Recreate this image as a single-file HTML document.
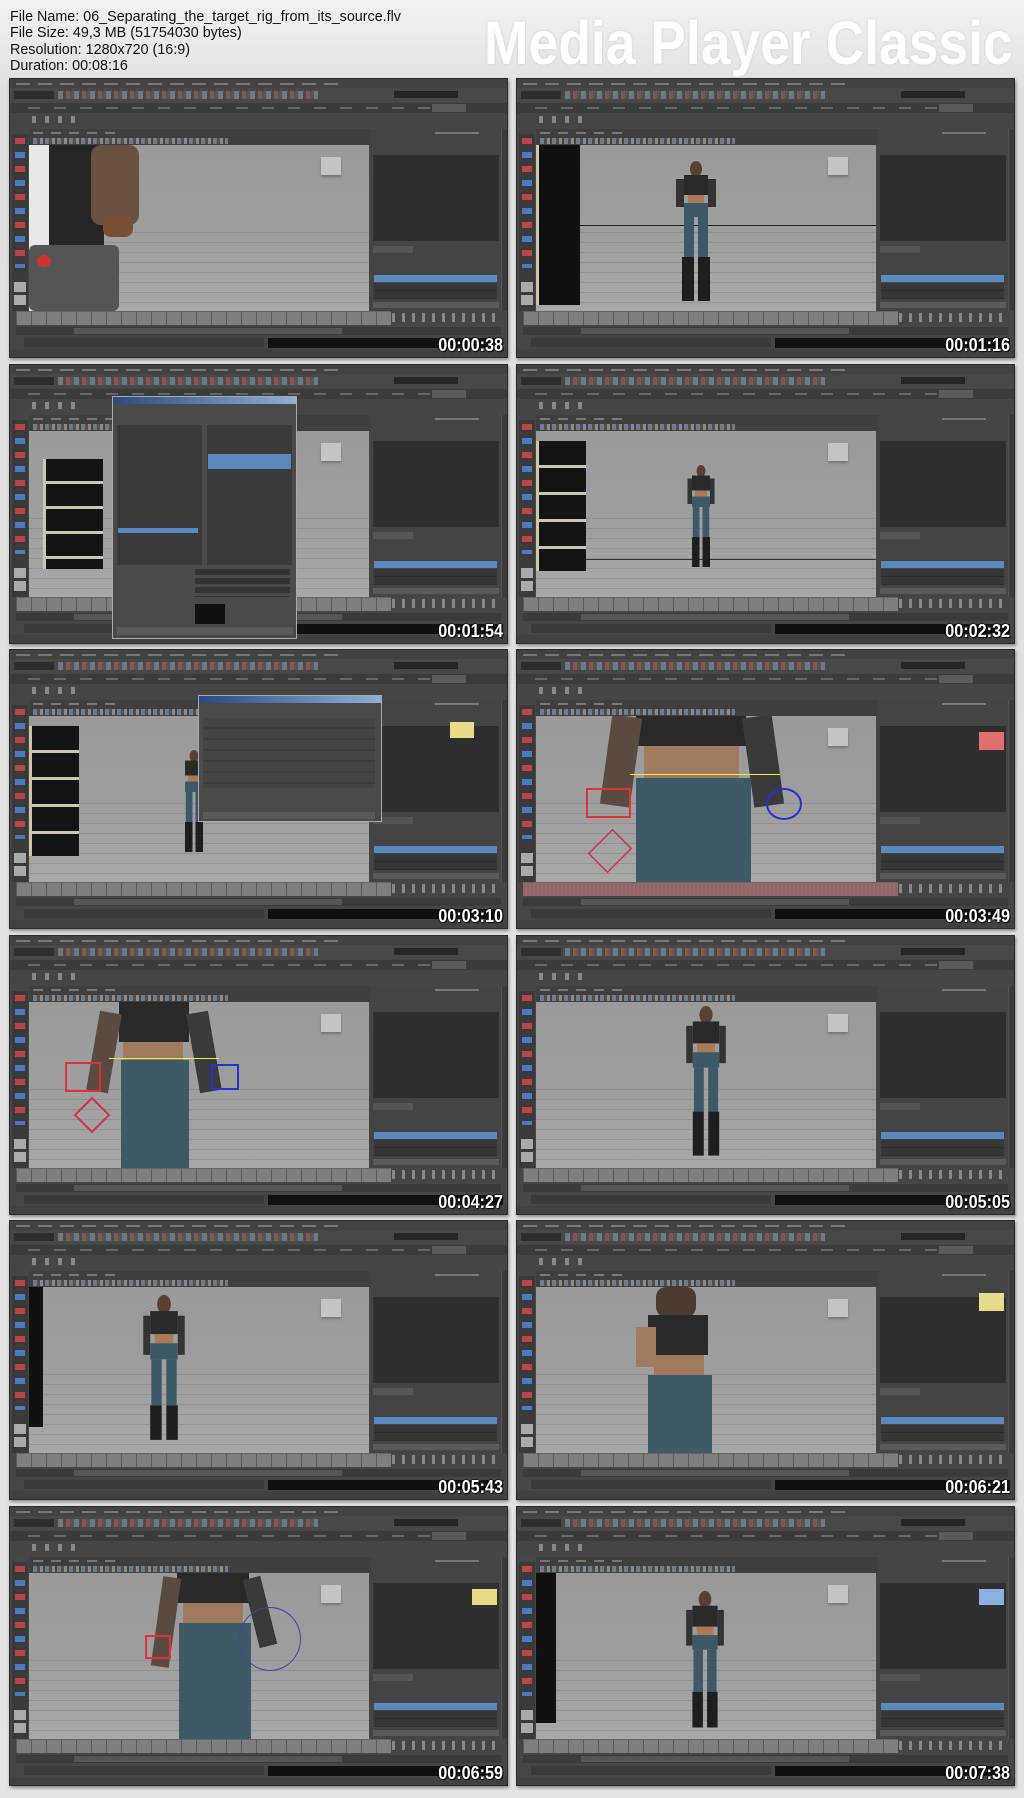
<!DOCTYPE html>
<html><head><meta charset="utf-8">
<style>
*{margin:0;padding:0;box-sizing:border-box}
body{width:1024px;height:1798px;overflow:hidden;background:linear-gradient(180deg,#f2f2f2 0%,#e0e0e0 5%,#e4e4e4 100%);font-family:"Liberation Sans",sans-serif;position:relative}
.hdr{position:absolute;left:10px;top:9px;font-size:15px;line-height:16.3px;color:#111;transform:scaleX(.955);transform-origin:0 0;white-space:nowrap}
.title{position:absolute;left:484px;top:8px;font-weight:bold;font-size:61px;color:#fff;text-shadow:0 0 3px #ccc;white-space:nowrap;transform:scaleX(.876);transform-origin:0 0}
.t{position:absolute;width:499px;height:280px;background:#464646;overflow:hidden;box-shadow:1px 2px 3px rgba(0,0,0,.4);border:1px solid #2a2a2a}
.t div{position:absolute}
.mb{left:0;top:0;width:499px;height:9px;background:#424242;}
.mb:after{content:"";position:absolute;left:6px;top:4px;width:330px;height:2px;background:repeating-linear-gradient(90deg,#777 0 14px,transparent 14px 22px)}
.tb{left:0;top:9px;width:499px;height:14px;background:#484848}
.tb:before{content:"";position:absolute;left:4px;top:3px;width:40px;height:8px;background:#2e2e2e}
.tb:after{content:"";position:absolute;left:48px;top:3px;width:260px;height:8px;background:repeating-linear-gradient(90deg,#6a7a8c 0 5px,#4c4c4c 5px 8px,#8a5550 8px 12px,#555 12px 16px)}
.tbk{left:384px;top:12px;width:64px;height:7px;background:#262626}
.st{left:0;top:24px;width:499px;height:10px;background:#3b3b3b}
.st:after{content:"";position:absolute;left:18px;top:4px;width:412px;height:2px;background:repeating-linear-gradient(90deg,#666 0 12px,transparent 12px 26px)}
.stsel{left:422px;top:25px;width:34px;height:8px;background:#5a5a5a}
.sh{left:0;top:34px;width:499px;height:15px;background:#454545}
.sh:after{content:"";position:absolute;left:22px;top:3px;width:46px;height:7px;background:repeating-linear-gradient(90deg,#888 0 4px,transparent 4px 13px)}
.pm{left:19px;top:50px;width:342px;height:16px;background:#3f3f3f}
.pm:before{content:"";position:absolute;left:4px;top:3px;width:90px;height:2px;background:repeating-linear-gradient(90deg,#777 0 10px,transparent 10px 18px)}
.pm:after{content:"";position:absolute;left:4px;top:9px;width:195px;height:6px;background:repeating-linear-gradient(90deg,#6d7d90 0 4px,#505050 4px 7px,#8a8a8a 7px 10px,#444 10px 12px)}
.lt{left:2px;top:55px;width:16px;height:177px;background:#3a3a3a}
.lt:after{content:"";position:absolute;left:3px;top:4px;width:10px;height:130px;background:repeating-linear-gradient(180deg,#b44 0 6px,#3a3a3a 6px 14px,#4a7ac0 14px 20px,#3a3a3a 20px 28px)}
.lt2{left:4px;top:203px;width:12px;height:24px;background:repeating-linear-gradient(180deg,#aaa 0 10px,#3a3a3a 10px 13px)}
.vp{left:19px;top:66px;width:340px;height:166px;background:linear-gradient(180deg,#9a9a9a 0%,#9e9e9e 50%,#a8a8a8 100%);overflow:hidden}
.grid{left:0;top:78px;width:340px;height:88px;background:repeating-linear-gradient(180deg,transparent 0 9px,rgba(80,80,80,.2) 9px 10px)}
.vc{left:292px;top:12px;width:20px;height:18px;background:#c4c4c4;box-shadow:0 2px 2px #777}
.rp{left:361px;top:50px;width:130px;height:182px;background:#444}
.rp:before{content:"";position:absolute;left:64px;top:3px;width:44px;height:2px;background:#777}
.rd{left:363px;top:76px;width:126px;height:86px;background:#2f2f2f}
.rt{left:363px;top:167px;width:40px;height:7px;background:#555}
.rl{left:364px;top:196px;width:123px;height:7px;background:#5b88bd}
.rl2{left:364px;top:204px;width:123px;height:16px;background:repeating-linear-gradient(180deg,#373737 0 7px,#2c2c2c 7px 8px)}
.rs{left:363px;top:223px;width:126px;height:6px;background:#5a5a5a}
.rb{left:491px;top:50px;width:8px;height:182px;background:#3b3b3b;border-left:1px solid #555}
.tl{left:6px;top:232px;width:375px;height:14px;background:repeating-linear-gradient(90deg,#5a5a5a 0 1px,#7e7e7e 1px 15px);border-top:1px solid #666}
.tr{left:382px;top:234px;width:110px;height:9px;background:repeating-linear-gradient(90deg,#888 0 3px,#454545 3px 10px)}
.rg{left:6px;top:248px;width:485px;height:8px;background:#3b3b3b}
.rg:after{content:"";position:absolute;left:58px;top:1px;width:268px;height:6px;background:#555}
.cl{left:14px;top:259px;width:240px;height:9px;background:#3a3a3a}
.cb{left:258px;top:259px;width:235px;height:10px;background:#111}
.sb{left:0;top:270px;width:499px;height:10px;background:#414141}
.ts{right:4px;bottom:1px;font-weight:bold;font-size:18px;color:#fff;text-shadow:1px 1px 1px #000,-1px 0 1px #000,0 -1px 1px #222;transform:scaleX(.9);transform-origin:100% 100%}
.shelf{background:#111;border-left:3px solid #cfc6ae}
.dlg{background:#4a4a4a;border:1px solid #aaa}
.fg div{position:absolute}
</style></head><body>
<div class="hdr">File Name: 06_Separating_the_target_rig_from_its_source.flv<br>File Size: 49,3 MB (51754030 bytes)<br>Resolution: 1280x720 (16:9)<br>Duration: 00:08:16</div>
<div class="title">Media Player Classic</div>

<!-- 1 -->
<div class="t" style="left:9px;top:78px">
<div class="mb"></div><div class="tb"></div><div class="tbk"></div><div class="st"></div><div class="stsel"></div><div class="sh"></div><div class="pm"></div><div class="lt"></div><div class="lt2"></div>
<div class="vp"><div class="grid"></div><div class="vc"></div>
<div style="left:0;top:0;width:30px;height:166px;background:#e8e8e8"></div>
<div style="left:20px;top:0;width:55px;height:166px;background:#262626"></div>
<div style="left:62px;top:0;width:48px;height:80px;background:#6a5040;border-radius:10px"></div>
<div style="left:74px;top:70px;width:30px;height:22px;background:#7a5035;border-radius:8px"></div>
<div style="left:0;top:100px;width:90px;height:66px;background:#555;border-radius:6px"></div>
<div style="left:8px;top:110px;width:14px;height:12px;background:#c33;border-radius:50%"></div>
</div>
<div class="rp"></div><div class="rd"></div><div class="rt"></div><div class="rl"></div><div class="rl2"></div><div class="rs"></div><div class="rb"></div>
<div class="tl"></div><div class="tr"></div><div class="rg"></div><div class="cl"></div><div class="cb"></div><div class="sb"></div>
<div class="ts">00:00:38</div></div>

<!-- 2 -->
<div class="t" style="left:516px;top:78px">
<div class="mb"></div><div class="tb"></div><div class="tbk"></div><div class="st"></div><div class="stsel"></div><div class="sh"></div><div class="pm"></div><div class="lt"></div><div class="lt2"></div>
<div class="vp"><div class="grid"></div><div class="vc"></div>
<div class="shelf" style="left:0;top:0;width:44px;height:160px"></div>
<div style="left:44px;top:80px;width:296px;height:1px;background:#222"></div>
<div class="fg" style="left:140px;top:16px">
<div style="left:14px;top:0;width:12px;height:16px;background:#5a4030;border-radius:50%"></div>
<div style="left:8px;top:14px;width:24px;height:20px;background:#2a2a2a"></div>
<div style="left:12px;top:34px;width:16px;height:8px;background:#a87a58"></div>
<div style="left:0;top:18px;width:8px;height:28px;background:#333"></div>
<div style="left:32px;top:18px;width:8px;height:28px;background:#333"></div>
<div style="left:8px;top:42px;width:24px;height:14px;background:#3d5866"></div>
<div style="left:8px;top:56px;width:10px;height:40px;background:#3d5866"></div>
<div style="left:22px;top:56px;width:10px;height:40px;background:#3d5866"></div>
<div style="left:6px;top:96px;width:12px;height:44px;background:#1e1e1e"></div>
<div style="left:22px;top:96px;width:12px;height:44px;background:#1e1e1e"></div>
</div></div>
<div class="rp"></div><div class="rd"></div><div class="rt"></div><div class="rl"></div><div class="rl2"></div><div class="rs"></div><div class="rb"></div>
<div class="tl"></div><div class="tr"></div><div class="rg"></div><div class="cl"></div><div class="cb"></div><div class="sb"></div>
<div class="ts">00:01:16</div></div>

<!-- 3 -->
<div class="t" style="left:9px;top:364px">
<div class="mb"></div><div class="tb"></div><div class="tbk"></div><div class="st"></div><div class="stsel"></div><div class="sh"></div><div class="pm"></div><div class="lt"></div><div class="lt2"></div>
<div class="vp"><div class="grid"></div><div class="vc"></div>
<div class="shelf" style="left:14px;top:28px;width:60px;height:110px;background:repeating-linear-gradient(180deg,#141414 0 22px,#cfc6ae 22px 25px)"></div>
</div>
<div class="rp"></div><div class="rd"></div><div class="rt"></div><div class="rl"></div><div class="rl2"></div><div class="rs"></div><div class="rb"></div>
<div class="tl"></div><div class="tr"></div><div class="rg"></div><div class="cl"></div><div class="cb"></div><div class="sb"></div>
<div class="dlg" style="left:102px;top:31px;width:185px;height:243px">
<div style="left:0;top:0;width:183px;height:7px;background:linear-gradient(90deg,#2a4a80,#8fb0d8)"></div>
<div style="left:4px;top:28px;width:85px;height:140px;background:#3a3a3a"></div>
<div style="left:94px;top:28px;width:85px;height:140px;background:#3a3a3a"></div>
<div style="left:95px;top:57px;width:83px;height:15px;background:#5b88bd"></div>
<div style="left:5px;top:131px;width:80px;height:5px;background:#5b88bd"></div>
<div style="left:82px;top:172px;width:95px;height:28px;background:repeating-linear-gradient(180deg,#333 0 6px,#4a4a4a 6px 9px)"></div>
<div style="left:82px;top:207px;width:30px;height:20px;background:#111"></div>
<div style="left:4px;top:230px;width:176px;height:8px;background:#5a5a5a"></div>
</div>
<div class="ts">00:01:54</div></div>

<!-- 4 -->
<div class="t" style="left:516px;top:364px">
<div class="mb"></div><div class="tb"></div><div class="tbk"></div><div class="st"></div><div class="stsel"></div><div class="sh"></div><div class="pm"></div><div class="lt"></div><div class="lt2"></div>
<div class="vp"><div class="grid"></div><div class="vc"></div>
<div class="shelf" style="left:0;top:10px;width:50px;height:130px;background:repeating-linear-gradient(180deg,#141414 0 24px,#cfc6ae 24px 27px)"></div>
<div style="left:50px;top:128px;width:290px;height:1px;background:#333"></div>
<div class="fg" style="left:150px;top:34px;transform:scale(.75);transform-origin:0 0">
<div style="left:14px;top:0;width:12px;height:16px;background:#5a4030;border-radius:50%"></div>
<div style="left:8px;top:14px;width:24px;height:20px;background:#2a2a2a"></div>
<div style="left:12px;top:34px;width:16px;height:8px;background:#a87a58"></div>
<div style="left:2px;top:18px;width:6px;height:34px;background:#333"></div>
<div style="left:32px;top:18px;width:6px;height:34px;background:#333"></div>
<div style="left:8px;top:42px;width:24px;height:14px;background:#3d5866"></div>
<div style="left:9px;top:56px;width:9px;height:40px;background:#3d5866"></div>
<div style="left:22px;top:56px;width:9px;height:40px;background:#3d5866"></div>
<div style="left:8px;top:96px;width:10px;height:40px;background:#1e1e1e"></div>
<div style="left:22px;top:96px;width:10px;height:40px;background:#1e1e1e"></div>
</div></div>
<div class="rp"></div><div class="rd"></div><div class="rt"></div><div class="rl"></div><div class="rl2"></div><div class="rs"></div><div class="rb"></div>
<div class="tl"></div><div class="tr"></div><div class="rg"></div><div class="cl"></div><div class="cb"></div><div class="sb"></div>
<div class="ts">00:02:32</div></div>

<!-- 5 -->
<div class="t" style="left:9px;top:649px">
<div class="mb"></div><div class="tb"></div><div class="tbk"></div><div class="st"></div><div class="stsel"></div><div class="sh"></div><div class="pm"></div><div class="lt"></div><div class="lt2"></div>
<div class="vp"><div class="grid"></div><div class="vc"></div>
<div class="shelf" style="left:0;top:10px;width:50px;height:130px;background:repeating-linear-gradient(180deg,#141414 0 24px,#cfc6ae 24px 27px)"></div>
<div class="fg" style="left:150px;top:34px;transform:scale(.75);transform-origin:0 0">
<div style="left:14px;top:0;width:12px;height:16px;background:#5a4030;border-radius:50%"></div>
<div style="left:8px;top:14px;width:24px;height:20px;background:#2a2a2a"></div>
<div style="left:12px;top:34px;width:16px;height:8px;background:#a87a58"></div>
<div style="left:8px;top:42px;width:24px;height:14px;background:#3d5866"></div>
<div style="left:9px;top:56px;width:9px;height:40px;background:#3d5866"></div>
<div style="left:22px;top:56px;width:9px;height:40px;background:#3d5866"></div>
<div style="left:8px;top:96px;width:10px;height:40px;background:#1e1e1e"></div>
<div style="left:22px;top:96px;width:10px;height:40px;background:#1e1e1e"></div>
</div></div>
<div class="rp"></div><div class="rd"></div><div class="rt"></div><div class="rl"></div><div class="rl2"></div><div class="rs"></div><div class="rb"></div>
<div style="left:440px;top:72px;width:24px;height:16px;background:#e6dc8a"></div>
<div class="tl"></div><div class="tr"></div><div class="rg"></div><div class="cl"></div><div class="cb"></div><div class="sb"></div>
<div class="dlg" style="left:188px;top:45px;width:184px;height:127px">
<div style="left:0;top:0;width:182px;height:7px;background:linear-gradient(90deg,#2a4a80,#8fb0d8)"></div>
<div style="left:4px;top:22px;width:172px;height:70px;background:repeating-linear-gradient(180deg,#444 0 9px,#3c3c3c 9px 11px)"></div>
<div style="left:4px;top:116px;width:172px;height:7px;background:#5a5a5a"></div>
</div>
<div class="ts">00:03:10</div></div>

<!-- 6 -->
<div class="t" style="left:516px;top:649px">
<div class="mb"></div><div class="tb"></div><div class="tbk"></div><div class="st"></div><div class="stsel"></div><div class="sh"></div><div class="pm"></div><div class="lt"></div><div class="lt2"></div>
<div class="vp"><div class="grid"></div><div class="vc"></div>
<div style="left:100px;top:0;width:110px;height:30px;background:#2a2a2a"></div>
<div style="left:108px;top:30px;width:95px;height:35px;background:#a07a5e"></div>
<div style="left:70px;top:0;width:30px;height:90px;background:#5a4a40;transform:rotate(8deg)"></div>
<div style="left:212px;top:0;width:30px;height:90px;background:#3a3a3a;transform:rotate(-8deg)"></div>
<div style="left:100px;top:62px;width:115px;height:104px;background:#3e5a66"></div>
<div style="left:50px;top:72px;width:45px;height:30px;border:2px solid #d33"></div>
<div style="left:54px;top:110px;width:40px;height:50px;border:2px solid #c34;transform:rotate(45deg) scale(.7)"></div>
<div style="left:230px;top:72px;width:36px;height:32px;border:2px solid #23c;border-radius:50%"></div>
<div style="left:94px;top:58px;width:150px;height:1px;background:#ee3"></div>
</div>
<div class="rp"></div><div class="rd"></div><div class="rt"></div><div class="rl"></div><div class="rl2"></div><div class="rs"></div><div class="rb"></div>
<div style="left:462px;top:82px;width:25px;height:18px;background:#e07070"></div>
<div class="tl" style="background:repeating-linear-gradient(90deg,#a06060 0 2px,#8a7070 2px 4px)"></div><div class="tr"></div><div class="rg"></div><div class="cl"></div><div class="cb"></div><div class="sb"></div>
<div class="ts">00:03:49</div></div>

<!-- 7 -->
<div class="t" style="left:9px;top:935px">
<div class="mb"></div><div class="tb"></div><div class="tbk"></div><div class="st"></div><div class="stsel"></div><div class="sh"></div><div class="pm"></div><div class="lt"></div><div class="lt2"></div>
<div class="vp"><div class="grid"></div><div class="vc"></div>
<div style="left:90px;top:0;width:70px;height:40px;background:#2a2a2a"></div>
<div style="left:94px;top:40px;width:60px;height:20px;background:#a07a5e"></div>
<div style="left:64px;top:10px;width:22px;height:80px;background:#5a4a40;transform:rotate(10deg)"></div>
<div style="left:164px;top:10px;width:22px;height:80px;background:#3a3a3a;transform:rotate(-10deg)"></div>
<div style="left:92px;top:58px;width:68px;height:108px;background:#3e5a66"></div>
<div style="left:36px;top:60px;width:36px;height:30px;border:2px solid #d33"></div>
<div style="left:50px;top:100px;width:26px;height:26px;border:2px solid #c34;transform:rotate(45deg)"></div>
<div style="left:182px;top:62px;width:28px;height:26px;border:2px solid #23c"></div>
<div style="left:80px;top:56px;width:110px;height:1px;background:#ee3"></div>
</div>
<div class="rp"></div><div class="rd"></div><div class="rt"></div><div class="rl"></div><div class="rl2"></div><div class="rs"></div><div class="rb"></div>
<div class="tl"></div><div class="tr"></div><div class="rg"></div><div class="cl"></div><div class="cb"></div><div class="sb"></div>
<div class="ts">00:04:27</div></div>

<!-- 8 -->
<div class="t" style="left:516px;top:935px">
<div class="mb"></div><div class="tb"></div><div class="tbk"></div><div class="st"></div><div class="stsel"></div><div class="sh"></div><div class="pm"></div><div class="lt"></div><div class="lt2"></div>
<div class="vp"><div class="grid"></div><div class="vc"></div>
<div class="fg" style="left:148px;top:4px;transform:scale(1.1);transform-origin:0 0">
<div style="left:14px;top:0;width:12px;height:16px;background:#5a4030;border-radius:50%"></div>
<div style="left:8px;top:14px;width:24px;height:20px;background:#2a2a2a"></div>
<div style="left:12px;top:34px;width:16px;height:8px;background:#a87a58"></div>
<div style="left:2px;top:18px;width:6px;height:34px;background:#333"></div>
<div style="left:32px;top:18px;width:6px;height:34px;background:#333"></div>
<div style="left:8px;top:42px;width:24px;height:14px;background:#3d5866"></div>
<div style="left:9px;top:56px;width:9px;height:40px;background:#3d5866"></div>
<div style="left:22px;top:56px;width:9px;height:40px;background:#3d5866"></div>
<div style="left:8px;top:96px;width:10px;height:40px;background:#1e1e1e"></div>
<div style="left:22px;top:96px;width:10px;height:40px;background:#1e1e1e"></div>
</div></div>
<div class="rp"></div><div class="rd"></div><div class="rt"></div><div class="rl"></div><div class="rl2"></div><div class="rs"></div><div class="rb"></div>
<div class="tl"></div><div class="tr"></div><div class="rg"></div><div class="cl"></div><div class="cb"></div><div class="sb"></div>
<div class="ts">00:05:05</div></div>

<!-- 9 -->
<div class="t" style="left:9px;top:1220px">
<div class="mb"></div><div class="tb"></div><div class="tbk"></div><div class="st"></div><div class="stsel"></div><div class="sh"></div><div class="pm"></div><div class="lt"></div><div class="lt2"></div>
<div class="vp"><div class="grid"></div><div class="vc"></div>
<div style="left:0;top:0;width:14px;height:140px;background:#111"></div>
<div class="fg" style="left:112px;top:8px;transform:scale(1.15);transform-origin:0 0">
<div style="left:14px;top:0;width:12px;height:16px;background:#5a4030;border-radius:50%"></div>
<div style="left:8px;top:14px;width:24px;height:20px;background:#2a2a2a"></div>
<div style="left:12px;top:34px;width:16px;height:8px;background:#a87a58"></div>
<div style="left:2px;top:18px;width:6px;height:34px;background:#333"></div>
<div style="left:32px;top:18px;width:6px;height:34px;background:#333"></div>
<div style="left:8px;top:42px;width:24px;height:14px;background:#3d5866"></div>
<div style="left:9px;top:56px;width:9px;height:40px;background:#3d5866"></div>
<div style="left:22px;top:56px;width:9px;height:40px;background:#3d5866"></div>
<div style="left:8px;top:96px;width:10px;height:30px;background:#1e1e1e"></div>
<div style="left:22px;top:96px;width:10px;height:30px;background:#1e1e1e"></div>
</div></div>
<div class="rp"></div><div class="rd"></div><div class="rt"></div><div class="rl"></div><div class="rl2"></div><div class="rs"></div><div class="rb"></div>
<div class="tl"></div><div class="tr"></div><div class="rg"></div><div class="cl"></div><div class="cb"></div><div class="sb"></div>
<div class="ts">00:05:43</div></div>

<!-- 10 -->
<div class="t" style="left:516px;top:1220px">
<div class="mb"></div><div class="tb"></div><div class="tbk"></div><div class="st"></div><div class="stsel"></div><div class="sh"></div><div class="pm"></div><div class="lt"></div><div class="lt2"></div>
<div class="vp"><div class="grid"></div><div class="vc"></div>
<div style="left:120px;top:0;width:40px;height:30px;background:#4a3a30;border-radius:10px"></div>
<div style="left:112px;top:28px;width:60px;height:40px;background:#2a2a2a"></div>
<div style="left:100px;top:40px;width:20px;height:40px;background:#a07a5e"></div>
<div style="left:118px;top:68px;width:50px;height:20px;background:#a07a5e"></div>
<div style="left:112px;top:88px;width:64px;height:78px;background:#3e5a66"></div>
</div>
<div class="rp"></div><div class="rd"></div><div class="rt"></div><div class="rl"></div><div class="rl2"></div><div class="rs"></div><div class="rb"></div>
<div style="left:462px;top:72px;width:25px;height:18px;background:#e6dc8a"></div>
<div class="tl"></div><div class="tr"></div><div class="rg"></div><div class="cl"></div><div class="cb"></div><div class="sb"></div>
<div class="ts">00:06:21</div></div>

<!-- 11 -->
<div class="t" style="left:9px;top:1506px">
<div class="mb"></div><div class="tb"></div><div class="tbk"></div><div class="st"></div><div class="stsel"></div><div class="sh"></div><div class="pm"></div><div class="lt"></div><div class="lt2"></div>
<div class="vp"><div class="grid"></div><div class="vc"></div>
<div style="left:148px;top:0;width:72px;height:30px;background:#2a2a2a"></div>
<div style="left:154px;top:30px;width:60px;height:20px;background:#a07a5e"></div>
<div style="left:128px;top:4px;width:18px;height:90px;background:#5a4a40;transform:rotate(8deg)"></div>
<div style="left:222px;top:4px;width:18px;height:70px;background:#3a3a3a;transform:rotate(-14deg)"></div>
<div style="left:150px;top:50px;width:72px;height:116px;background:#3e5a66"></div>
<div style="left:210px;top:34px;width:62px;height:64px;border:1px solid #44a;border-radius:50%"></div>
<div style="left:116px;top:62px;width:26px;height:24px;border:2px solid #d33"></div>
</div>
<div class="rp"></div><div class="rd"></div><div class="rt"></div><div class="rl"></div><div class="rl2"></div><div class="rs"></div><div class="rb"></div>
<div style="left:462px;top:82px;width:25px;height:16px;background:#e6dc8a"></div>
<div class="tl"></div><div class="tr"></div><div class="rg"></div><div class="cl"></div><div class="cb"></div><div class="sb"></div>
<div class="ts">00:06:59</div></div>

<!-- 12 -->
<div class="t" style="left:516px;top:1506px">
<div class="mb"></div><div class="tb"></div><div class="tbk"></div><div class="st"></div><div class="stsel"></div><div class="sh"></div><div class="pm"></div><div class="lt"></div><div class="lt2"></div>
<div class="vp"><div class="grid"></div><div class="vc"></div>
<div style="left:0;top:0;width:20px;height:150px;background:#111"></div>
<div class="fg" style="left:148px;top:18px;transform:scale(1.05);transform-origin:0 0">
<div style="left:14px;top:0;width:12px;height:16px;background:#5a4030;border-radius:50%"></div>
<div style="left:8px;top:14px;width:24px;height:20px;background:#2a2a2a"></div>
<div style="left:12px;top:34px;width:16px;height:8px;background:#a87a58"></div>
<div style="left:2px;top:18px;width:6px;height:34px;background:#333"></div>
<div style="left:32px;top:18px;width:6px;height:34px;background:#333"></div>
<div style="left:8px;top:42px;width:24px;height:14px;background:#3d5866"></div>
<div style="left:9px;top:56px;width:9px;height:40px;background:#3d5866"></div>
<div style="left:22px;top:56px;width:9px;height:40px;background:#3d5866"></div>
<div style="left:8px;top:96px;width:10px;height:34px;background:#1e1e1e"></div>
<div style="left:22px;top:96px;width:10px;height:34px;background:#1e1e1e"></div>
</div></div>
<div class="rp"></div><div class="rd"></div><div class="rt"></div><div class="rl"></div><div class="rl2"></div><div class="rs"></div><div class="rb"></div>
<div style="left:462px;top:82px;width:25px;height:16px;background:#8ab0e0"></div>
<div class="tl"></div><div class="tr"></div><div class="rg"></div><div class="cl"></div><div class="cb"></div><div class="sb"></div>
<div class="ts">00:07:38</div></div>

</body></html>
